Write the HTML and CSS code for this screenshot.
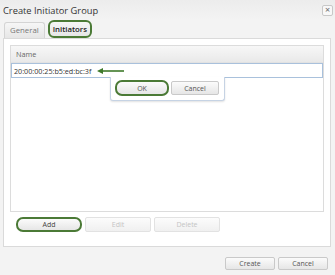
FILE: index.html
```html
<!DOCTYPE html>
<html>
<head>
  <title>Create Initiator Group</title>
  <link rel="stylesheet" href="styles.css">
</head>
<body>
  <div class="dialog">
    <div class="titlebar">
      <span class="title">Create Initiator Group</span>
      <span class="close">&times;</span>
    </div>
    <div class="tabs">
      <div class="tab">General</div>
      <div class="tab active">Initiators</div>
    </div>
    <div class="panel">
      <div class="grid">
        <div class="grid-header">Name</div>
        <div class="grid-body">
          <div class="edit-row">
            <span class="edit-value">20:00:00:25:b5:ed:bc:3f</span>
            <svg class="arrow" width="28" height="6" viewBox="0 0 28 6">
              <path d="M4 3 H27" stroke="#3f7a2b" stroke-width="1.6"/>
              <path d="M0 3 L6 0 L6 6 Z" fill="#3f7a2b"/>
            </svg>
          </div>
          <div class="editor">
            <button class="btn ok">OK</button>
            <button class="btn">Cancel</button>
          </div>
        </div>
      </div>
      <div class="actions">
        <button class="btn add">Add</button>
        <button class="btn disabled">Edit</button>
        <button class="btn disabled">Delete</button>
      </div>
    </div>
    <div class="footer">
      <button class="btn">Create</button>
      <button class="btn">Cancel</button>
    </div>
  </div>
</body>
</html>
```

FILE: styles.css
```css
body {
  margin: 0;
  background-color: #f2f2f2;
  font-family: "Open Sans", "DejaVu Sans", sans-serif;
  color: #444;
}

.dialog {
  width: 335px;
  height: 275px;
  background: linear-gradient(#ececec, #f3f3f3 20px, #f3f3f3);
}

.titlebar {
  height: 21px;
  display: flex;
  align-items: center;
  justify-content: space-between;
  padding: 0 2px 0 3px;
  box-sizing: border-box;
}

.title {
  font-size: 9.3px;
  color: #333;
}

.close {
  width: 9px;
  height: 9px;
  border: 1px solid #c8c8c8;
  border-radius: 2px;
  background-color: #f8f8f8;
  font-size: 9px;
  line-height: 8px;
  text-align: center;
  color: #666;
}

.tabs {
  display: flex;
  gap: 3px;
  padding-left: 4px;
  height: 17px;
  align-items: flex-end;
}

.tab {
  height: 15px;
  padding: 0 5px;
  font-size: 7.8px;
  line-height: 15px;
  color: #777;
  border: 1px solid #d4d4d4;
  border-bottom: none;
  border-radius: 3px 3px 0 0;
  background: linear-gradient(#f6f6f6, #e6e6e6);
  min-width: 27px;
  text-align: center;
}

.tab.active {
  height: 14px;
  line-height: 14px;
  color: #222;
  font-weight: 600;
  background-color: #fff;
  border: 2px solid #4b7a36;
  border-radius: 6px;
  padding: 0 3px;
  min-width: 31px;
}

.panel {
  margin: 0 4px 0 3px;
  height: 209px;
  box-sizing: border-box;
  border: 1px solid #dadada;
  background-color: #fff;
  padding: 6px 6px 0 6px;
}

.grid {
  height: 167px;
  box-sizing: border-box;
  border: 1px solid #dcdcdc;
  display: flex;
  flex-direction: column;
}

.grid-header {
  height: 16px;
  line-height: 16px;
  padding-left: 5px;
  font-size: 7.3px;
  color: #666;
  background: linear-gradient(#f7f7f7, #e9e9e9);
  border-bottom: 1px solid #e2e2e2;
}

.grid-body {
  position: relative;
  flex: 1;
}

.edit-row {
  height: 13px;
  border: 1px solid #a9c1dc;
  display: flex;
  align-items: center;
  padding-left: 2px;
  gap: 6px;
}

.edit-value {
  font-size: 7.2px;
  color: #333;
}

.arrow {
  display: block;
}

.editor {
  position: absolute;
  left: 99px;
  top: 14px;
  width: 115px;
  height: 24px;
  box-sizing: border-box;
  border: 1px solid #c6d3e4;
  border-top: none;
  border-radius: 0 0 3px 3px;
  background-color: #fff;
  display: flex;
  gap: 2px;
  padding: 3px 0 0 4px;
  box-shadow: 0 1px 2px rgba(0, 0, 0, 0.12);
}

.btn {
  font-family: "Open Sans", "DejaVu Sans", sans-serif;
  font-size: 7px;
  color: #555;
  height: 14px;
  padding: 0;
  border: 1px solid #c9c9c9;
  border-radius: 2px;
  background: linear-gradient(#fbfbfb, #e6e6e6);
  box-sizing: border-box;
}

.editor .btn {
  width: 48px;
  height: 14px;
  margin-top: 1px;
}

.editor .btn.ok {
  width: 54px;
  height: 16px;
  margin-top: 0;
  border: 2px solid #4b7a36;
  border-radius: 7px;
}

.actions {
  display: flex;
  gap: 3px;
  padding: 5px 0 0 6px;
}

.actions .btn {
  width: 66px;
  height: 15px;
}

.actions .btn.add {
  border: 2px solid #4b7a36;
  border-radius: 7px;
  color: #444;
}

.actions .btn.disabled {
  color: #c4c4c4;
  border-color: #e2e2e2;
  background: linear-gradient(#fcfcfc, #f0f0f0);
}

.footer {
  display: flex;
  justify-content: flex-end;
  gap: 3px;
  padding: 10px 7px 0 0;
}

.footer .btn {
  width: 50px;
  height: 13px;
}
```
